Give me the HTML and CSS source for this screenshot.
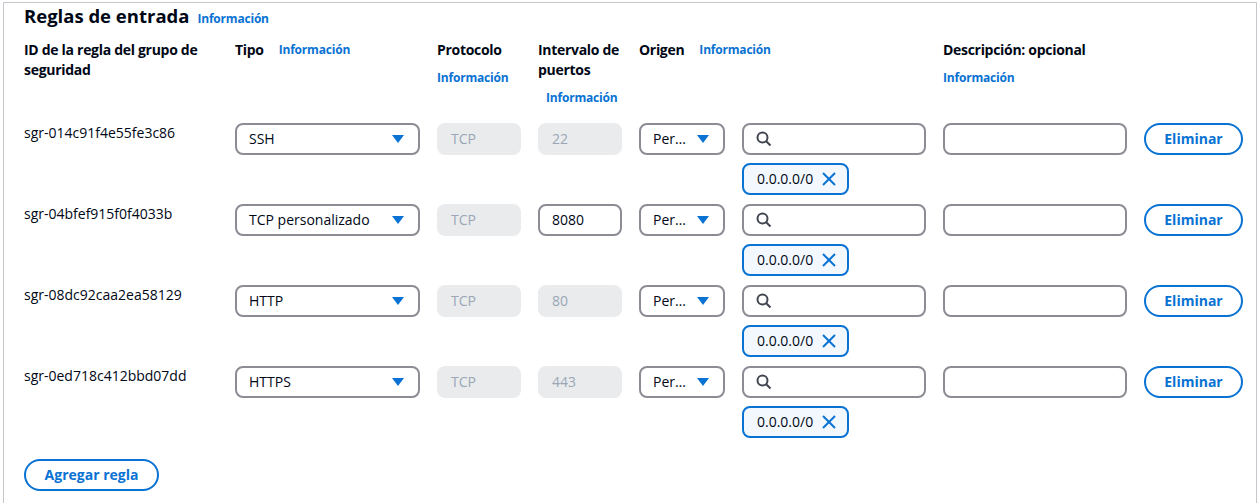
FILE: index.html
```html
<!DOCTYPE html>
<html lang="es">
<head>
<meta charset="utf-8">
<link rel="stylesheet" href="styles.css">
</head>
<body>
<div class="panel">
  <div class="title-row">
    <h2 class="title">Reglas de entrada</h2>
    <a class="info">Información</a>
  </div>

  <div class="grid head">
    <div class="hcell"><span class="label">ID de la regla del grupo de seguridad</span></div>
    <div class="hcell inline"><span class="label">Tipo</span><a class="info">Información</a></div>
    <div class="hcell"><span class="label">Protocolo</span><a class="info stack">Información</a></div>
    <div class="hcell"><span class="label narrow">Intervalo de puertos</span><a class="info stack indent">Información</a></div>
    <div class="hcell inline wide"><span class="label">Origen</span><a class="info">Información</a></div>
    <div class="hcell"><span class="label">Descripción: opcional</span><a class="info stack">Información</a></div>
    <div class="hcell"></div>
  </div>

  <div class="rules">
    <div class="grid rule">
      <div class="rid">sgr-014c91f4e55fe3c86</div>
      <div class="select"><span>SSH</span><svg class="caret" viewBox="0 0 12 8"><polygon points="0,0 12,0 6,8"/></svg></div>
      <div class="field disabled">TCP</div>
      <div class="field disabled">22</div>
      <div class="select small"><span>Per…</span><svg class="caret" viewBox="0 0 12 8"><polygon points="0,0 12,0 6,8"/></svg></div>
      <div class="source">
        <div class="field search"><svg class="mag" viewBox="0 0 16 16"><circle cx="6.5" cy="6.5" r="5"/><line x1="10.2" y1="10.2" x2="14.5" y2="14.5"/></svg></div>
        <div class="token"><span>0.0.0.0/0</span><svg class="xicon" viewBox="0 0 16 16"><line x1="2" y1="2" x2="14" y2="14"/><line x1="14" y1="2" x2="2" y2="14"/></svg></div>
      </div>
      <div class="field"></div>
      <div><button class="btn">Eliminar</button></div>
    </div>

    <div class="grid rule">
      <div class="rid">sgr-04bfef915f0f4033b</div>
      <div class="select"><span>TCP personalizado</span><svg class="caret" viewBox="0 0 12 8"><polygon points="0,0 12,0 6,8"/></svg></div>
      <div class="field disabled">TCP</div>
      <div class="field">8080</div>
      <div class="select small"><span>Per…</span><svg class="caret" viewBox="0 0 12 8"><polygon points="0,0 12,0 6,8"/></svg></div>
      <div class="source">
        <div class="field search"><svg class="mag" viewBox="0 0 16 16"><circle cx="6.5" cy="6.5" r="5"/><line x1="10.2" y1="10.2" x2="14.5" y2="14.5"/></svg></div>
        <div class="token"><span>0.0.0.0/0</span><svg class="xicon" viewBox="0 0 16 16"><line x1="2" y1="2" x2="14" y2="14"/><line x1="14" y1="2" x2="2" y2="14"/></svg></div>
      </div>
      <div class="field"></div>
      <div><button class="btn">Eliminar</button></div>
    </div>

    <div class="grid rule">
      <div class="rid">sgr-08dc92caa2ea58129</div>
      <div class="select"><span>HTTP</span><svg class="caret" viewBox="0 0 12 8"><polygon points="0,0 12,0 6,8"/></svg></div>
      <div class="field disabled">TCP</div>
      <div class="field disabled">80</div>
      <div class="select small"><span>Per…</span><svg class="caret" viewBox="0 0 12 8"><polygon points="0,0 12,0 6,8"/></svg></div>
      <div class="source">
        <div class="field search"><svg class="mag" viewBox="0 0 16 16"><circle cx="6.5" cy="6.5" r="5"/><line x1="10.2" y1="10.2" x2="14.5" y2="14.5"/></svg></div>
        <div class="token"><span>0.0.0.0/0</span><svg class="xicon" viewBox="0 0 16 16"><line x1="2" y1="2" x2="14" y2="14"/><line x1="14" y1="2" x2="2" y2="14"/></svg></div>
      </div>
      <div class="field"></div>
      <div><button class="btn">Eliminar</button></div>
    </div>

    <div class="grid rule">
      <div class="rid">sgr-0ed718c412bbd07dd</div>
      <div class="select"><span>HTTPS</span><svg class="caret" viewBox="0 0 12 8"><polygon points="0,0 12,0 6,8"/></svg></div>
      <div class="field disabled">TCP</div>
      <div class="field disabled">443</div>
      <div class="select small"><span>Per…</span><svg class="caret" viewBox="0 0 12 8"><polygon points="0,0 12,0 6,8"/></svg></div>
      <div class="source">
        <div class="field search"><svg class="mag" viewBox="0 0 16 16"><circle cx="6.5" cy="6.5" r="5"/><line x1="10.2" y1="10.2" x2="14.5" y2="14.5"/></svg></div>
        <div class="token"><span>0.0.0.0/0</span><svg class="xicon" viewBox="0 0 16 16"><line x1="2" y1="2" x2="14" y2="14"/><line x1="14" y1="2" x2="2" y2="14"/></svg></div>
      </div>
      <div class="field"></div>
      <div><button class="btn">Eliminar</button></div>
    </div>
  </div>

  <div class="footer">
    <button class="btn add">Agregar regla</button>
  </div>
</div>
</body>
</html>
```

FILE: styles.css
```css
* { box-sizing: border-box; }

html, body {
  margin: 0;
  padding: 0;
  background: #ffffff;
  overflow: hidden;
}

body {
  font-family: "Open Sans", "Noto Sans", sans-serif;
  color: #000716;
  font-size: 14px;
  line-height: 20px;
}

.panel {
  margin: 2px 2px 0 3px;
  width: 1254px;
  height: 520px;
  border: 1px solid #c6c6cd;
  border-radius: 0 0 12px 12px;
  padding: 1px 0 0 20px;
}

.title-row {
  display: flex;
  align-items: baseline;
  gap: 8px;
  height: 24px;
}

.title {
  margin: 0;
  font-size: 18.5px;
  line-height: 24px;
  font-weight: 700;
}

.info {
  font-size: 12px;
  line-height: 20px;
  font-weight: 700;
  color: #0972d3;
  text-decoration: none;
  letter-spacing: -0.2px;
}

.grid {
  display: grid;
  grid-template-columns: 194px 185px 84px 84px 86px 184px 184px 99px;
  column-gap: 17px;
}

.head {
  margin-top: 12px;
  align-items: start;
}

.hcell {
  display: flex;
  flex-direction: column;
  align-items: flex-start;
}

.hcell.inline {
  flex-direction: row;
  gap: 15px;
}

.hcell.wide {
  grid-column: span 2;
}

.label {
  font-weight: 700;
  font-size: 14px;
  line-height: 20px;
  letter-spacing: -0.3px;
}

.label.narrow {
  width: 92px;
}

.info.stack {
  margin-top: 8px;
}

.info.indent {
  margin-left: 8px;
}

.rules {
  margin-top: 15px;
  display: flex;
  flex-direction: column;
  gap: 9px;
}

.rule {
  align-items: start;
}

.rid {
  line-height: 20px;
}

.select,
.field {
  height: 32px;
  border: 2px solid #8c8c94;
  border-radius: 8px;
  background: #ffffff;
  display: flex;
  align-items: center;
  padding: 0 12px;
  font-size: 14px;
}

.select {
  justify-content: space-between;
  padding-right: 14px;
}

.caret {
  width: 12px;
  height: 8px;
  fill: #0972d3;
  flex: none;
}

.field.disabled {
  background: #e9ebed;
  border-color: #e9ebed;
  color: #9ba7b6;
}

.source {
  display: flex;
  flex-direction: column;
  align-items: flex-start;
  gap: 8px;
}

.search {
  width: 100%;
}

.mag {
  width: 16px;
  height: 16px;
  fill: none;
  stroke: #424650;
  stroke-width: 2;
}

.token {
  height: 32px;
  display: flex;
  align-items: center;
  gap: 8px;
  padding: 0 10px 0 13px;
  background: #f2f8fd;
  border: 2px solid #0972d3;
  border-radius: 8px;
}

.xicon {
  width: 16px;
  height: 16px;
  stroke: #0972d3;
  stroke-width: 2;
}

.btn {
  font-family: "Open Sans", "Noto Sans", sans-serif;
  font-size: 14px;
  font-weight: 700;
  color: #0972d3;
  background: #ffffff;
  border: 2px solid #0972d3;
  border-radius: 20px;
  height: 32px;
  width: 99px;
  padding: 0;
  line-height: 20px;
}

.footer {
  margin-top: 21px;
}

.btn.add {
  width: 135px;
}
```
